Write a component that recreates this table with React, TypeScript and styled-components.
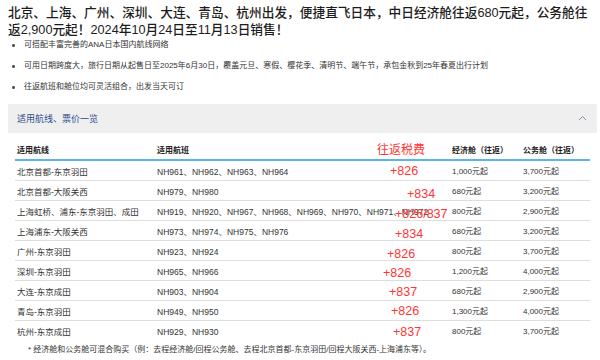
import React from "react";
import styled, { createGlobalStyle } from "styled-components";

const GlobalStyle = createGlobalStyle`
  html, body {
    margin: 0;
    padding: 0;
    background: #ffffff;
  }
  body {
    font-family: "Liberation Sans", "Noto Sans CJK SC", sans-serif;
    color: #333333;
  }
`;

type Route = {
  route: string;
  flights: string;
  tax: string;
  taxX: number;
  taxY: number;
  eco: string;
  biz: string;
};

const routes: Route[] = [
  { route: "北京首都-东京羽田", flights: "NH961、NH962、NH963、NH964", tax: "+826", taxX: 375, taxY: 0, eco: "1,000元起", biz: "3,700元起" },
  { route: "北京首都-大阪关西", flights: "NH979、NH980", tax: "+834", taxX: 392, taxY: 2.5, eco: "680元起", biz: "3,200元起" },
  { route: "上海虹桥、浦东-东京羽田、成田", flights: "NH919、NH920、NH967、NH968、NH969、NH970、NH971、NH972", tax: "+826/837", taxX: 380, taxY: 2.5, eco: "800元起", biz: "2,900元起" },
  { route: "上海浦东-大阪关西", flights: "NH973、NH974、NH975、NH976", tax: "+834", taxX: 380, taxY: 2.5, eco: "680元起", biz: "3,200元起" },
  { route: "广州-东京羽田", flights: "NH923、NH924", tax: "+826", taxX: 372, taxY: 2.5, eco: "800元起", biz: "3,700元起" },
  { route: "深圳-东京羽田", flights: "NH965、NH966", tax: "+826", taxX: 368, taxY: 1.5, eco: "1,200元起", biz: "4,000元起" },
  { route: "大连-东京成田", flights: "NH903、NH904", tax: "+837", taxX: 374, taxY: 0.5, eco: "680元起", biz: "2,900元起" },
  { route: "青岛-东京羽田", flights: "NH949、NH950", tax: "+826", taxX: 376, taxY: -0.5, eco: "1,300元起", biz: "4,000元起" },
  { route: "杭州-东京成田", flights: "NH929、NH930", tax: "+837", taxX: 378, taxY: 0.5, eco: "800元起", biz: "3,700元起" },
];

const bullets = [
  "可搭配丰富完善的ANA日本国内航线网络",
  "可用日期跨度大，旅行日期从起售日至2025年6月30日，覆盖元旦、寒假、樱花季、清明节、端午节，承包金秋到25年春夏出行计划",
  "往返航班和舱位均可灵活组合，出发当天可订",
];

const App = () => {
  return (
    <Page>
      <GlobalStyle />
      <Title>
        北京、上海、广州、深圳、大连、青岛、杭州出发，便捷直飞日本，中日经济舱往返680元起，公务舱往返2,900元起！2024年10月24日至11月13日销售！
      </Title>
      <Bullets>
        {bullets.map((b) => (
          <Bullet key={b}>{b}</Bullet>
        ))}
      </Bullets>
      <Panel>
        <PanelHead>
          <span>适用航线、票价一览</span>
          <svg width="9" height="6" viewBox="0 0 9 6">
            <polyline points="1,5 4.5,1.5 8,5" fill="none" stroke="#8290b2" strokeWidth="1" />
          </svg>
        </PanelHead>
        <Table>
          <HeadRow>
            <Cell>适用航线</Cell>
            <Cell>适用航班</Cell>
            <Cell>经济舱（往返）</Cell>
            <Cell>公务舱（往返）</Cell>
            <TaxHead>往返税费</TaxHead>
          </HeadRow>
          {routes.map((r, i) => (
            <Row key={r.route} $last={i === routes.length - 1}>
              <Cell>{r.route}</Cell>
              <Cell>{r.flights}</Cell>
              <Price>{r.eco}</Price>
              <Price>{r.biz}</Price>
              <TaxMark $x={r.taxX} $y={r.taxY}>
                {r.tax}
              </TaxMark>
            </Row>
          ))}
        </Table>
        <Note>* 经济舱和公务舱可混合购买（例：去程经济舱/回程公务舱、去程北京首都-东京羽田/回程大阪关西-上海浦东等）。</Note>
      </Panel>
    </Page>
  );
};

export default App;

const Page = styled.div`
  width: 589px;
  padding: 5px 3px 0 8px;
`;

const Title = styled.h1`
  width: 582px;
  margin: 0;
  font-family: "Liberation Sans", "Noto Sans CJK SC", sans-serif;
  font-size: 12.7px;
  line-height: 17px;
  font-weight: 500;
  color: #1c1c1c;
`;

const Bullets = styled.ul`
  list-style: none;
  margin: 0;
  padding: 0;
  display: flex;
  flex-direction: column;
  gap: 9px;
`;

const Bullet = styled.li`
  position: relative;
  padding-left: 16px;
  font-size: 8px;
  line-height: 12px;
  color: #333;
  &::before {
    content: "";
    position: absolute;
    left: 4px;
    top: 5px;
    width: 2.5px;
    height: 2.5px;
    border-radius: 50%;
    background: #555;
  }
`;

const Panel = styled.div`
  margin-top: 11px;
`;

const PanelHead = styled.div`
  height: 29px;
  background: #efeff0;
  display: flex;
  align-items: center;
  justify-content: space-between;
  padding: 0 10px 0 9px;
  font-size: 9px;
  color: #2d4b8a;
  svg {
    display: block;
    margin-top: -1px;
  }
`;

const Table = styled.div`
  margin: 7px 7px 0 7px;
`;

const Grid = styled.div`
  position: relative;
  display: grid;
  grid-template-columns: 140px 295px 71px 69px;
  align-items: center;
`;

const HeadRow = styled(Grid)`
  height: 19px;
  border-bottom: 2px solid #5ab6e6;
  font-size: 8px;
  font-weight: bold;
  color: #222;
`;

const Row = styled(Grid)<{ $last?: boolean }>`
  height: 19px;
  border-bottom: ${(p) => (p.$last ? "none" : "1px solid #dedede")};
  font-size: 8.5px;
  color: #333;
`;

const Cell = styled.div`
  padding-left: 2px;
  white-space: nowrap;
`;

const Price = styled(Cell)`
  font-size: 8px;
`;

const TaxMark = styled.span<{ $x: number; $y: number }>`
  position: absolute;
  left: ${(p) => p.$x}px;
  top: 50%;
  transform: translateY(calc(-50% + ${(p) => p.$y}px));
  font-family: "Liberation Sans", sans-serif;
  font-size: 12.5px;
  line-height: 14px;
  color: #ff3535;
  white-space: nowrap;
`;

const TaxHead = styled.span`
  position: absolute;
  left: 362px;
  top: 50%;
  transform: translateY(calc(-50% - 1.5px));
  font-family: "Noto Sans CJK SC", sans-serif;
  font-size: 12px;
  line-height: 14px;
  font-weight: normal;
  color: #ff3535;
`;

const Note = styled.div`
  margin: 4px 0 0 20px;
  font-size: 8px;
  line-height: 12px;
  color: #333;
`;
